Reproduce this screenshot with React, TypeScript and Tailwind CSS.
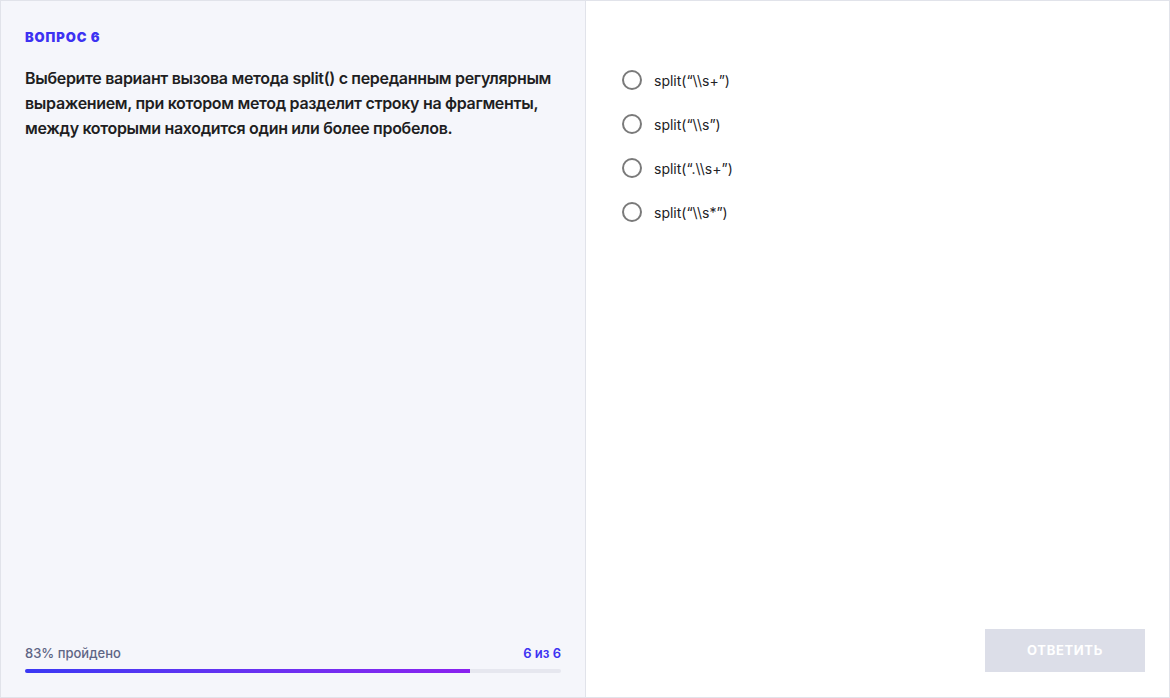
const options = ["split(“\\\\s+”)", "split(“\\\\s”)", "split(“.\\\\s+”)", "split(“\\\\s*”)"];

export default function App() {
  const passed = 83;
  return (
    <div
      className="w-[1170px] h-[698px] flex border border-[#e1e3ea] bg-white"
      style={{ fontFamily: "Inter, 'Noto Sans', sans-serif" }}
    >
      <div className="w-[585px] shrink-0 flex flex-col bg-[#f5f6fb] border-r border-[#e1e3ea] px-6 pt-[28px] pb-6">
        <div className="text-[13px] font-black text-[#3d32f2] leading-4 tracking-[0.07em]">ВОПРОС 6</div>
        <p className="mt-[21px] text-[16px] font-semibold leading-[25px] text-[#1e1e22] tracking-[-0.02em]">
          Выберите вариант вызова метода split() с переданным регулярным выражением, при котором метод разделит строку
          на фрагменты, между которыми находится один или более пробелов.
        </p>
        <div className="mt-auto">
          <div className="flex justify-between items-center text-[13px] leading-4">
            <span className="text-[#5e6585] font-medium">{passed}% пройдено</span>
            <span className="text-[#3d32f2] font-semibold">6 из 6</span>
          </div>
          <div className="mt-[8px] h-1 rounded-full bg-[#e6e7ef] overflow-hidden">
            <div
              className="h-full bg-gradient-to-r from-[#3a38f4] to-[#8a21ef]"
              style={{ width: `${passed}%` }}
            />
          </div>
        </div>
      </div>
      <div className="flex-1 flex flex-col pl-9 pr-6 pt-[69px] pb-[25px]">
        <div className="flex flex-col gap-6">
          {options.map((o) => (
            <label key={o} className="flex items-center gap-3 h-5 cursor-pointer">
              <span className="w-5 h-5 rounded-full border-2 border-[#7a7a7a] bg-white" />
              <span className="text-[14px] text-[#222226]">{o}</span>
            </label>
          ))}
        </div>
        <div className="mt-auto flex justify-end">
          <button className="w-[160px] h-[43px] bg-[#dcdee8] text-white text-[13px] font-bold tracking-[0.05em]">
            ОТВЕТИТЬ
          </button>
        </div>
      </div>
    </div>
  );
}
